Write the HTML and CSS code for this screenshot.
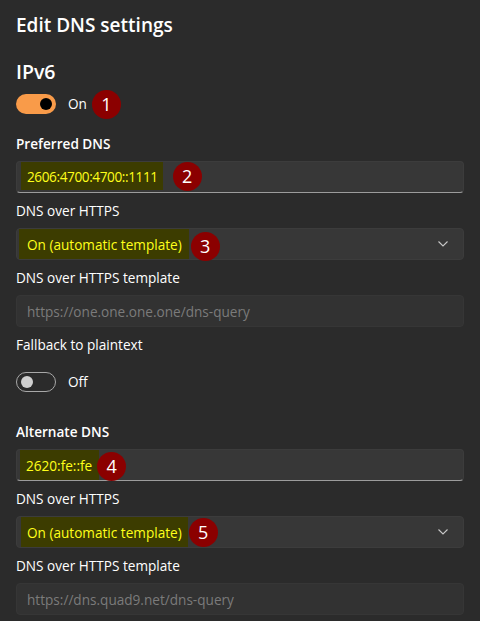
FILE: index.html
```html
<!DOCTYPE html>
<html>
<head>
<meta charset="utf-8">
<link rel="stylesheet" href="styles.css">
</head>
<body>
<div class="page">
  <h1 class="title">Edit DNS settings</h1>
  <h2 class="section">IPv6</h2>
  <div class="toggle-row">
    <span class="toggle on"><span class="knob"></span></span>
    <span class="toggle-text">On</span>
    <span class="badge b1">1</span>
  </div>

  <div class="label strong l-first">Preferred DNS</div>
  <div class="box input active">
    <span class="hl hl-2">2606:4700:4700::1111</span>
    <span class="badge b2">2</span>
  </div>
  <div class="label">DNS over HTTPS</div>
  <div class="box select">
    <span class="hl hl-3">On (automatic template)</span>
    <span class="badge b3">3</span>
    <svg class="chev" width="10" height="6" viewBox="0 0 10 6"><path d="M0.5 0.5 L5 5 L9.5 0.5" fill="none" stroke="#c8c8c8" stroke-width="1.1"/></svg>
  </div>
  <div class="label">DNS over HTTPS template</div>
  <div class="box input disabled">
    <span class="ph">https://one.one.one.one/dns-query</span>
  </div>
  <div class="label">Fallback to plaintext</div>
  <div class="toggle-row off-row">
    <span class="toggle off"><span class="knob"></span></span>
    <span class="toggle-text">Off</span>
  </div>

  <div class="label strong l-alt">Alternate DNS</div>
  <div class="box input active">
    <span class="hl hl-4">2620:fe::fe</span>
    <span class="badge b4">4</span>
  </div>
  <div class="label">DNS over HTTPS</div>
  <div class="box select">
    <span class="hl hl-5">On (automatic template)</span>
    <span class="badge b5">5</span>
    <svg class="chev" width="10" height="6" viewBox="0 0 10 6"><path d="M0.5 0.5 L5 5 L9.5 0.5" fill="none" stroke="#c8c8c8" stroke-width="1.1"/></svg>
  </div>
  <div class="label">DNS over HTTPS template</div>
  <div class="box input disabled">
    <span class="ph">https://dns.quad9.net/dns-query</span>
  </div>
</div>
</body>
</html>
```

FILE: styles.css
```css
* { box-sizing: border-box; }
html, body {
  margin: 0;
  padding: 0;
  background: #2b2b2b;
  color: #ffffff;
  font-family: "Open Sans", "Noto Sans", sans-serif;
  font-size: 13.6px;
  overflow: hidden;
}
.page {
  padding: 11px 16px 0 16px;
  display: flex;
  flex-direction: column;
}
.title {
  margin: 0;
  font-size: 19px;
  font-weight: 600;
  line-height: 28px;
  height: 28px;
}
.section {
  margin: 19px 0 0 0;
  font-size: 19.5px;
  font-weight: 600;
  line-height: 28px;
  height: 28px;
}
.toggle-row {
  margin-top: 8px;
  height: 20px;
  display: flex;
  align-items: center;
}
.toggle {
  width: 40px;
  height: 20px;
  border-radius: 10px;
  position: relative;
  flex: none;
}
.toggle.on { background: #f99b49; }
.toggle.off { border: 1px solid #a8a8a8; }
.toggle .knob {
  position: absolute;
  top: 4px;
  width: 12px;
  height: 12px;
  border-radius: 50%;
}
.toggle.on .knob { left: 24px; background: #000; }
.toggle.off .knob { left: 4px; top: 3px; background: #d0d0d0; }
.toggle-text {
  margin-left: 12px;
  font-size: 13.6px;
  line-height: 20px;
}
.badge {
  width: 29px;
  height: 29px;
  border-radius: 50%;
  background: #8b0000;
  color: #fff;
  font-size: 18px;
  display: inline-flex;
  align-items: center;
  justify-content: center;
  flex: none;
  position: relative;
}
.b1 { margin-left: 5px; }
.label {
  line-height: 20px;
  height: 20px;
  margin-top: 8px;
  margin-bottom: 7px;
}
.label.strong { font-weight: 600; }
.l-first { margin-top: 20px; }
.l-alt { margin-top: 30px; }
.off-row { margin-top: 10px; }
.box {
  height: 32px;
  border-radius: 4px;
  background: #373737;
  border: 1px solid #3c3c3c;
  display: flex;
  align-items: center;
  position: relative;
}
.input.active { border-bottom: 1px solid #9c9c9c; }
.hl {
  background: #3c3c00;
  color: #ffff1a;
  align-self: stretch;
  display: flex;
  align-items: center;
}
.hl-2 { margin-left: 4px; padding: 0 5px 0 6px; margin-bottom: 2px; letter-spacing: -0.4px; }
.hl-3 { margin-left: 2px; padding: 0 7px 0 8px; }
.hl-4 { margin-left: 3px; padding: 3px 7px 3px 6px; }
.hl-5 { margin-left: 4px; padding: 3px 6px; }
.b2 { margin-left: 10px; top: -1px; }
.b3 { margin-left: 2px; top: 2px; }
.b4 { margin-left: -2px; top: 1px; }
.b5 { margin-left: 1px; }
.chev { margin-left: auto; margin-right: 15px; }
.ph {
  color: #7b7b7b;
  margin-left: 10px;
}
.disabled { background: #323232; border-color: #363636; }
```
